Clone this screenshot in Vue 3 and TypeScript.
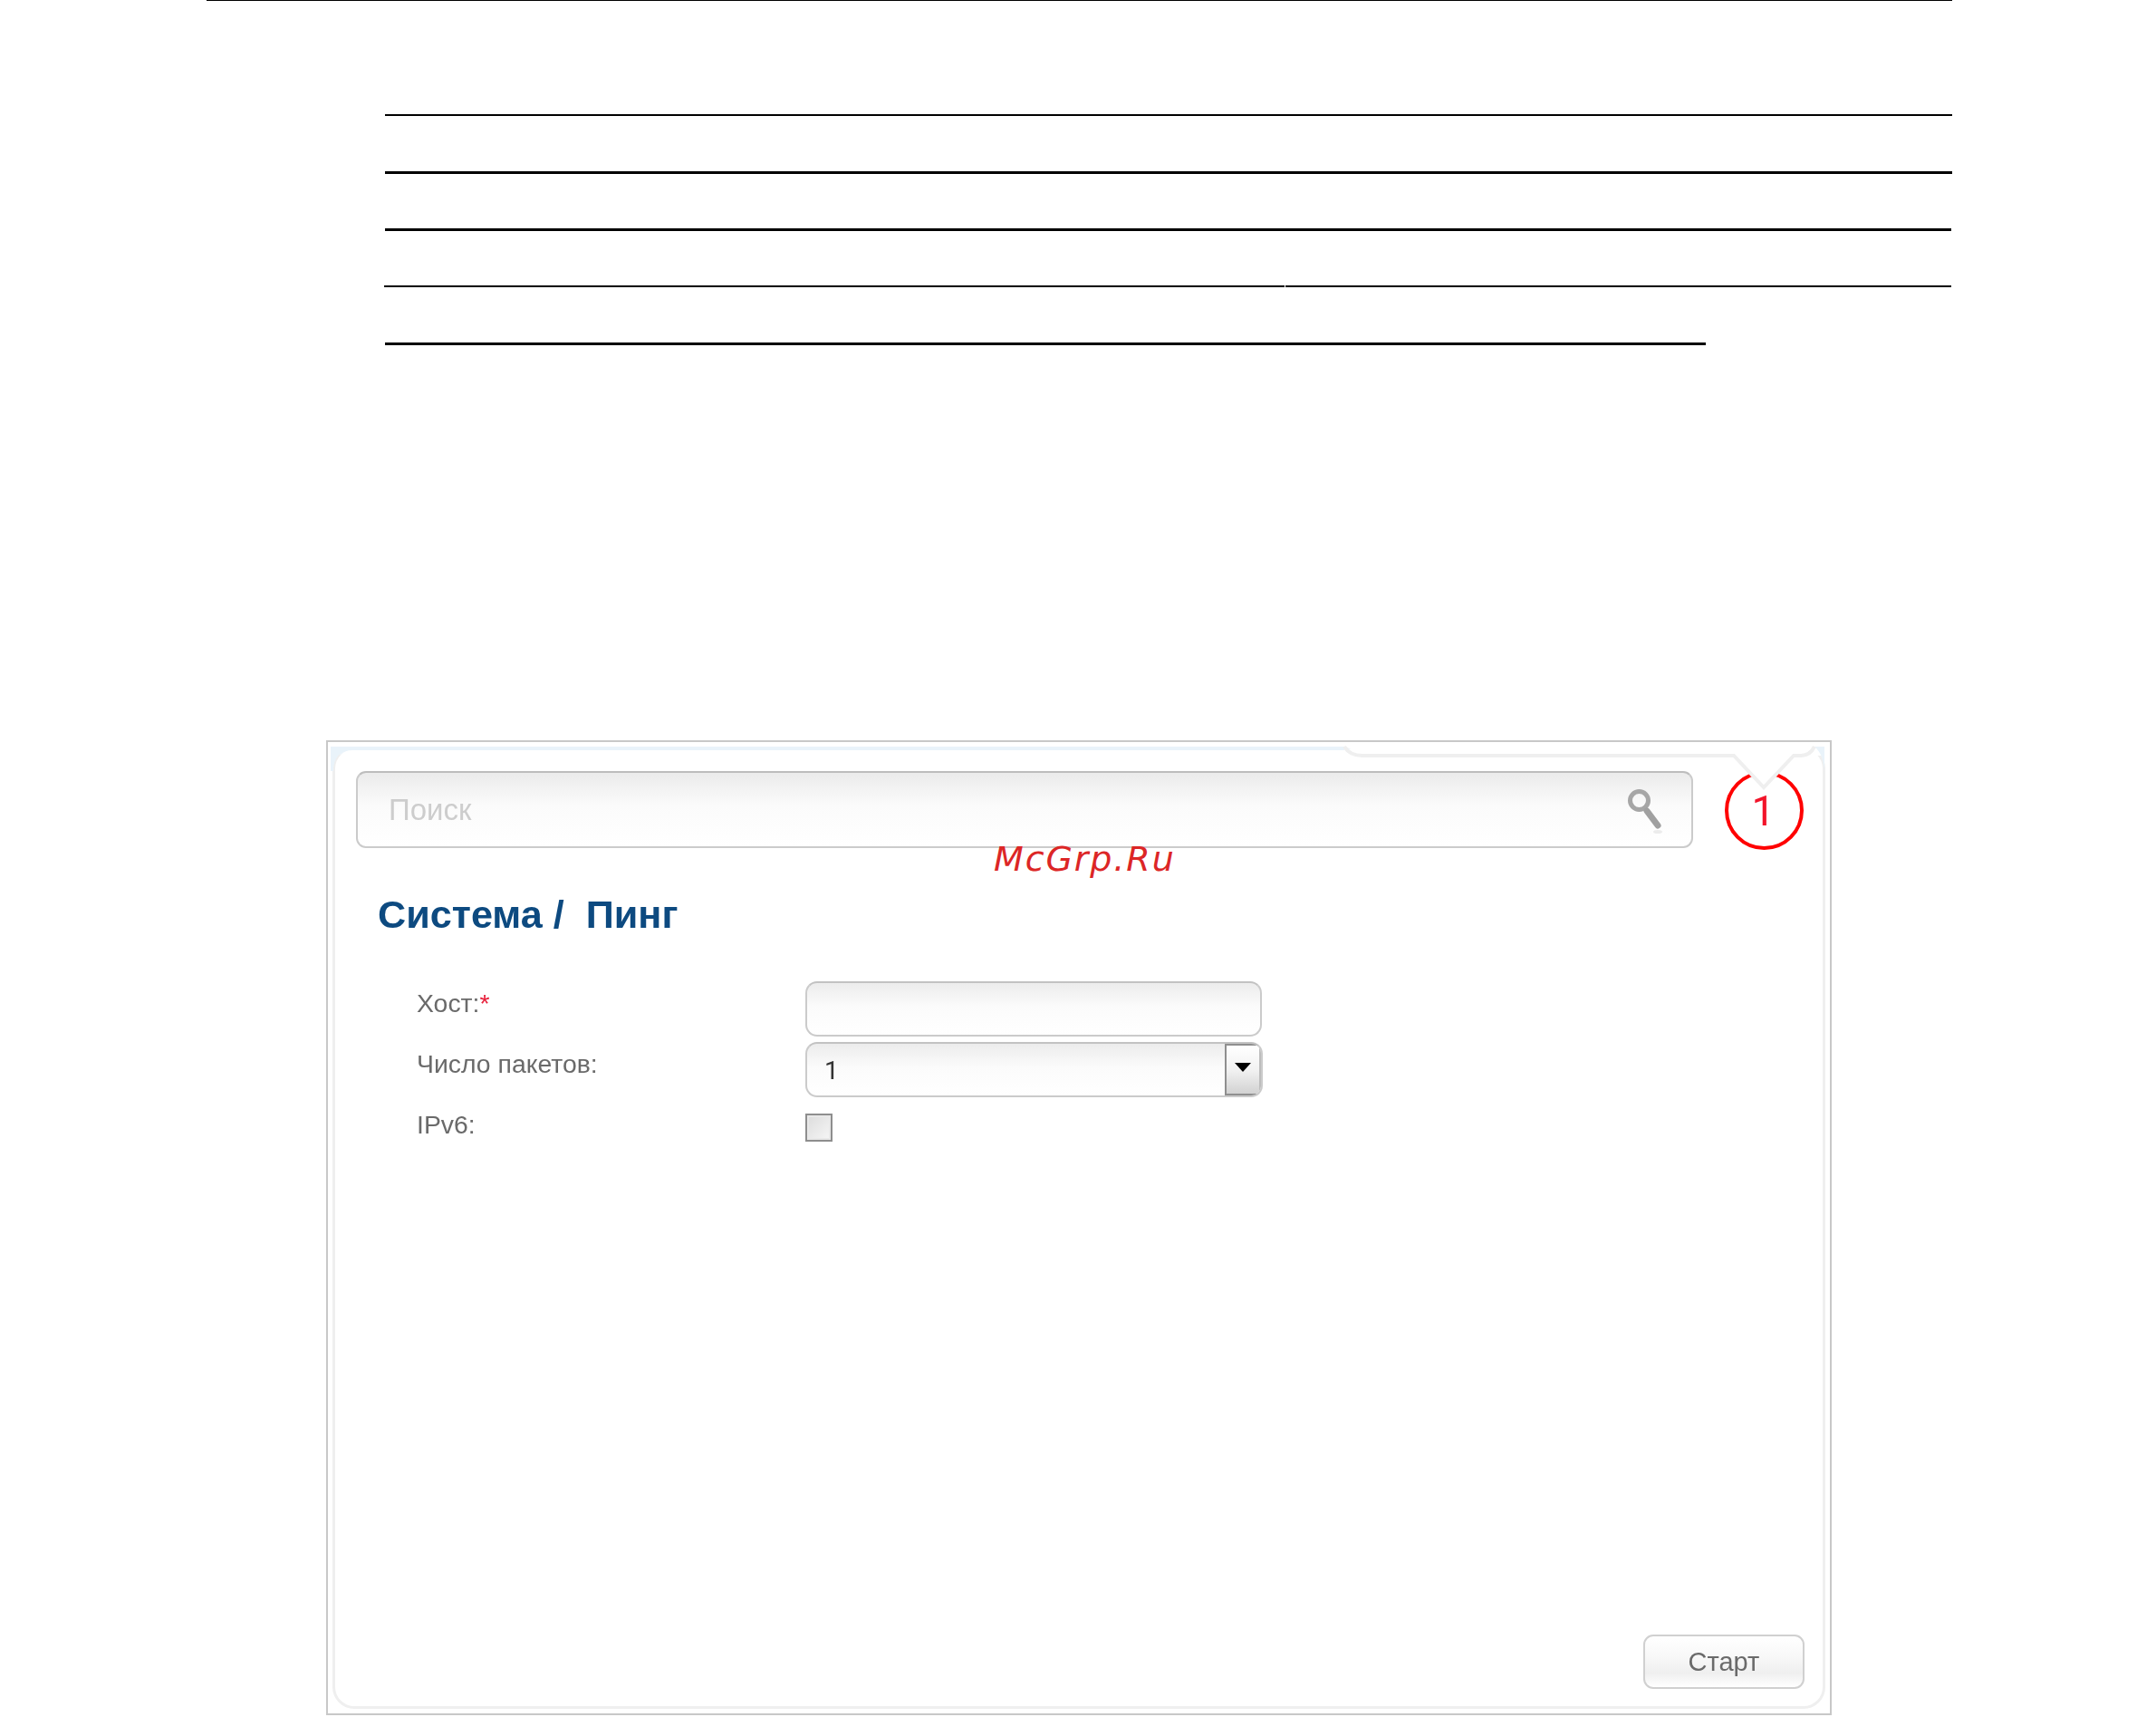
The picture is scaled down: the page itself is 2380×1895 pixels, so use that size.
<script setup lang="ts">
interface Rule {
  id: number
  thick: boolean
  kind: 'full' | 'inset' | 'short'
  split?: boolean
}

const rules: Rule[] = [
  { id: 1, thick: false, kind: 'full' },
  { id: 2, thick: true, kind: 'full' },
  { id: 3, thick: true, kind: 'inset' },
  { id: 4, thick: false, kind: 'inset', split: true },
  { id: 5, thick: true, kind: 'short' }
]
</script>

<template>
  <div class="page">
    <div class="top-rule"></div>

    <div class="rules">
      <div
        v-for="rule in rules"
        :key="rule.id"
        class="rule"
        :class="[rule.kind, { thick: rule.thick, split: rule.split }]"
      >
        <span class="seg seg-a"></span>
        <span v-if="rule.split" class="seg seg-b"></span>
      </div>
    </div>

    <section class="shot">
      <div class="card">
        <div class="search-row">
          <div class="search">
            <span class="placeholder">Поиск</span>
            <svg class="magnifier" viewBox="0 0 40 50" width="40" height="50" aria-hidden="true">
              <ellipse cx="33" cy="47" rx="5" ry="2" fill="#ececec" />
              <circle cx="12.5" cy="12.5" r="10" fill="none" stroke="#a6a6a6" stroke-width="5" />
              <path d="M21 24 L33 40" stroke="#a0a0a0" stroke-width="7" stroke-linecap="round" />
            </svg>
          </div>
          <div class="callout">1</div>
        </div>

        <h1 class="title">Система /&nbsp; Пинг</h1>

        <div class="form">
          <label class="label">Хост:<span class="req">*</span></label>
          <div class="field"></div>

          <label class="label">Число пакетов:</label>
          <div class="field select">
            <span class="value">1</span>
            <span class="drop"><i class="arrow"></i></span>
          </div>

          <label class="label">IPv6:</label>
          <div class="check"></div>
        </div>

        <button class="start" type="button">Старт</button>
      </div>

      <svg class="edge" viewBox="0 0 1658 60" width="1658" height="60" aria-hidden="true">
        <path d="M3 5 H1122 V9 H28 Q6 9 6 32 H3 Z" fill="#e9f3fa" />
        <path d="M1122 4 H1652 V15 H1618 L1585 50 L1552 15 H1142 Z" fill="#ffffff" />
        <path d="M1641 5 H1652 V36 Q1652 14 1641 5 Z" fill="#e9f3fa" />
        <path
          d="M1122 5 Q1128 15 1142 15 H1552 L1585 50 L1618 15 H1626 Q1636 15 1641 5"
          fill="none"
          stroke="#efefef"
          stroke-width="4"
        />
      </svg>
    </section>

    <div class="watermark">McGrp.Ru</div>
  </div>
</template>

<style scoped>
.page {
  position: relative;
  width: 2380px;
  height: 1895px;
  background: #ffffff;
  overflow: hidden;
  font-family: "Liberation Sans", Arial, sans-serif;
}

.top-rule {
  height: 1px;
  margin-left: 228px;
  width: 1927px;
  background: #000000;
}

.rules {
  display: flex;
  flex-direction: column;
  margin: 125px 0 0 425px;
  width: 1730px;
}

.rule {
  display: flex;
  height: 2px;
  margin-bottom: 61px;
}

.rule.thick {
  height: 3px;
  margin-bottom: 60px;
}

.rule.inset {
  width: 1729px;
}

.rule.split {
  width: 1730px;
  margin-left: -1px;
}

.rule.short {
  width: 1458px;
}

.seg {
  height: 100%;
  background: #000000;
}

.seg-a {
  flex: 1;
}

.split .seg-a {
  flex: 0 0 994px;
}

.seg-b {
  flex: 1;
  margin-left: 1px;
}

.shot {
  position: relative;
  box-sizing: border-box;
  display: flex;
  width: 1662px;
  height: 1076px;
  margin: 376px 0 0 360px;
  padding: 5px;
  border: 2px solid #c8c8c8;
  background: #ffffff;
}

.card {
  flex: 1;
  box-sizing: border-box;
  display: flex;
  flex-direction: column;
  padding: 24px 21px 19px 23px;
  border: 3px solid #efefef;
  border-top-color: #eef5fa;
  border-radius: 24px;
  background: #ffffff;
  filter: blur(0.45px);
}

.search-row {
  display: flex;
  gap: 35px;
  height: 85px;
}

.search {
  flex: 1;
  box-sizing: border-box;
  display: flex;
  align-items: center;
  justify-content: space-between;
  padding: 0 30px 0 34px;
  border: 2px solid #cbcbcb;
  border-top-color: #bdbdbd;
  border-radius: 11px;
  background: linear-gradient(#ebebeb, #fbfbfb 45%, #ffffff);
}

.placeholder {
  font-size: 33px;
  color: #cdcdcd;
}

.magnifier {
  margin-top: 4px;
}

.callout {
  box-sizing: border-box;
  width: 87px;
  height: 87px;
  border: 4px solid #ff0000;
  border-radius: 50%;
  display: flex;
  align-items: center;
  justify-content: center;
  padding: 0 2px 0 0;
  font-family: Roboto, sans-serif;
  font-size: 46px;
  color: #f2142a;
}

.title {
  margin: 49px 0 0 24px;
  font-size: 43.2px;
  line-height: 48px;
  font-weight: 700;
  color: #0d4a80;
}

.form {
  display: grid;
  grid-template-columns: 430px 503px;
  grid-auto-rows: auto;
  row-gap: 6px;
  margin: 50px 0 0 67px;
}

.label {
  padding-top: 8px;
  font-size: 28.4px;
  line-height: 32px;
  color: #6a6a6a;
}

.req {
  color: #e8213c;
}

.field {
  box-sizing: border-box;
  height: 61px;
  margin-left: -1px;
  border: 2px solid #cbcbcb;
  border-top-color: #c2c2c2;
  border-radius: 13px;
  background: linear-gradient(#ececec, #fbfbfb 45%, #ffffff);
}

.select {
  display: flex;
  align-items: center;
  justify-content: space-between;
  width: 505px;
  padding-left: 19px;
  overflow: hidden;
}

.value {
  margin-top: 2px;
  font-family: Roboto, sans-serif;
  font-size: 28.4px;
  color: #333333;
}

.drop {
  box-sizing: border-box;
  display: flex;
  align-items: center;
  justify-content: center;
  width: 40px;
  height: 100%;
  border: 2px solid #8f8f8f;
  border-right-color: #bdbdbd;
  background: linear-gradient(#ffffff, #f2f2f2 50%, #d2d2d2);
}

.arrow {
  width: 0;
  height: 0;
  margin-bottom: 6px;
  border-left: 9px solid transparent;
  border-right: 9px solid transparent;
  border-top: 10px solid #000000;
}

.check {
  box-sizing: border-box;
  width: 30px;
  height: 31px;
  margin: 12px 0 0 -1px;
  border: 2px solid #8e8e8e;
  background: linear-gradient(135deg, #dcdcdc, #f6f6f6);
  box-shadow: inset 0 0 0 2px #e8e8e8;
}

.start {
  box-sizing: border-box;
  align-self: flex-end;
  width: 178px;
  height: 60px;
  margin: auto -1px 0 0;
  padding: 0;
  border: 2px solid #d0d0d0;
  border-radius: 11px;
  background: linear-gradient(#ffffff, #f8f8f8 40%, #efefef 72%, #ffffff);
  font-family: inherit;
  font-size: 29px;
  color: #6a6a6a;
}

.edge {
  position: absolute;
  left: 0;
  top: 0;
  pointer-events: none;
}

.watermark {
  position: absolute;
  left: 1097px;
  top: 925px;
  font-family: "DejaVu Sans", sans-serif;
  font-style: italic;
  font-size: 38px;
  line-height: 46px;
  letter-spacing: 1.9px;
  color: #dc2626;
}
</style>
